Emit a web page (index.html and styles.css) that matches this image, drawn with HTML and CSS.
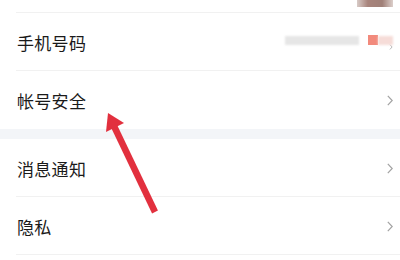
FILE: index.html
```html
<!DOCTYPE html>
<html lang="zh">
<head>
<meta charset="utf-8">
<link rel="stylesheet" href="styles.css">
</head>
<body>
<div class="page">
  <div class="group">
    <div class="row row-partial">
      <div class="avatar-blur"></div>
    </div>
    <div class="row">
      <span class="label">手机号码</span>
      <div class="value-blur">
        <span class="blur-bar"></span>
        <span class="blur-red"></span>
        <span class="blur-pink"></span>
        <svg class="chev chev-small" viewBox="0 0 6 11" width="4" height="6"><path d="M1 1 L5 5.5 L1 10" fill="none" stroke="#9a9a9a" stroke-width="1.3"/></svg>
      </div>
    </div>
    <div class="row row-last">
      <span class="label">帐号安全</span>
      <svg class="chev" viewBox="0 0 6 11" width="6" height="11"><path d="M0.8 0.8 L5.2 5.5 L0.8 10.2" fill="none" stroke="#a3a3a3" stroke-width="1.2"/></svg>
    </div>
  </div>
  <div class="gap"></div>
  <div class="group">
    <div class="row">
      <span class="label">消息通知</span>
      <svg class="chev" viewBox="0 0 6 11" width="6" height="11"><path d="M0.8 0.8 L5.2 5.5 L0.8 10.2" fill="none" stroke="#a3a3a3" stroke-width="1.2"/></svg>
    </div>
    <div class="row">
      <span class="label">隐私</span>
      <svg class="chev" viewBox="0 0 6 11" width="6" height="11"><path d="M0.8 0.8 L5.2 5.5 L0.8 10.2" fill="none" stroke="#a3a3a3" stroke-width="1.2"/></svg>
    </div>
  </div>
  <svg class="arrow" viewBox="0 0 400 260" width="400" height="260">
    <line x1="155" y1="212" x2="113" y2="124" stroke="#e2303e" stroke-width="6.5"/>
    <polygon points="108,113 106,132 124,123" fill="#e2303e"/>
  </svg>
</div>
</body>
</html>
```
FILE: styles.css
```css
html, body {
  margin: 0;
  padding: 0;
  background: #ffffff;
}
body {
  font-family: "Noto Sans CJK SC", "Noto Sans", sans-serif;
  color: #1a1a1a;
  width: 400px;
  height: 260px;
  overflow: hidden;
}
.page {
  position: relative;
  width: 400px;
  height: 260px;
}
.group {
  display: flex;
  flex-direction: column;
  background: #ffffff;
}
.row {
  position: relative;
  height: 58px;
  display: flex;
  align-items: center;
  justify-content: space-between;
  padding: 0 7px 0 17px;
  box-sizing: border-box;
}
.row::after {
  content: "";
  position: absolute;
  left: 16px;
  right: 0;
  bottom: 0;
  height: 1px;
  background: #f1f1f1;
}
.row-partial {
  height: 13px;
  align-items: flex-start;
}
.row-last::after {
  display: none;
}
.label {
  font-size: 17px;
  letter-spacing: 0.3px;
  line-height: 1;
}
.avatar-blur {
  margin-left: auto;
  width: 36px;
  height: 7px;
  background: linear-gradient(90deg, #d8cbc7 0%, #a8847c 30%, #a08078 70%, #dccfcb 100%);
  filter: blur(0.6px);
}
.value-blur {
  display: flex;
  align-items: center;
  margin-top: -4px;
}
.blur-bar {
  width: 74px;
  height: 9px;
  background: #e6e6e6;
  filter: blur(1.2px);
  margin-right: 9px;
}
.blur-red {
  width: 10px;
  height: 10px;
  background: #f28a7c;
  filter: blur(0.7px);
}
.blur-pink {
  width: 15px;
  height: 9px;
  background: #f6dcd8;
  filter: blur(1.2px);
}
.chev-small {
  margin-left: -4px;
  margin-top: 14px;
}
.gap {
  height: 10px;
  background: #f3f5f8;
}
.arrow {
  position: absolute;
  left: 0;
  top: 0;
  pointer-events: none;
}
```
